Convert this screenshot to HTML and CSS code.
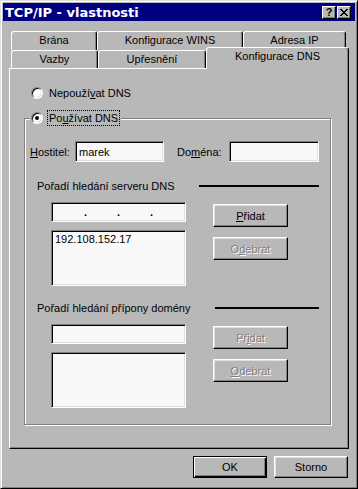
FILE: index.html
```html
<!DOCTYPE html>
<html lang="cs">
<head>
  <meta charset="UTF-8">
  <meta name="viewport" content="width=device-width, initial-scale=1.0">
  <title>TCP/IP - vlastnosti</title>
  <link rel="stylesheet" href="styles.css">
</head>
<body>
  <div class="window">
    <div class="titlebar">
      <span class="title">TCP/IP - vlastnosti</span>
      <div class="caption-buttons">
        <span class="cap-btn help">?</span>
        <span class="cap-btn">
          <svg width="8" height="7" viewBox="0 0 8 7" shape-rendering="crispEdges">
            <path fill="#000" d="M0 0h2v1H0z M6 0h2v1H6z M1 1h2v1H1z M5 1h2v1H5z M2 2h2v1H2z M4 2h2v1H4z M3 3h2v1H3z M2 4h2v1H2z M4 4h2v1H4z M1 5h2v1H1z M5 5h2v1H5z M0 6h2v1H0z M6 6h2v1H6z"/>
          </svg>
        </span>
      </div>
    </div>

    <div class="client">
      <div class="tabs">
        <div class="tabrow back">
          <div class="tab tab-brana">Brána</div>
          <div class="tab tab-wins">Konfigurace WINS</div>
          <div class="tab tab-ip">Adresa IP</div>
        </div>
        <div class="tabrow front">
          <div class="tab tab-vazby">Vazby</div>
          <div class="tab tab-upres">Upřesnění</div>
          <div class="tab tab-dns active">Konfigurace DNS</div>
        </div>
      </div>

      <div class="panel">
        <div class="radio-row">
          <span class="radio"></span>
          <span>Nepouží<u>v</u>at DNS</span>
        </div>

        <div class="group">
          <div class="legend">
            <span class="radio checked"></span>
            <span class="focus">Po<u>u</u>žívat DNS</span>
          </div>

          <div class="field-row">
            <label class="lbl-host"><u>H</u>ostitel:</label>
            <input class="edit host" type="text" value="marek">
            <label class="lbl-domain">Do<u>m</u>éna:</label>
            <input class="edit domain" type="text" value="">
          </div>

          <div class="section-head">
            <span>Pořadí hledání serveru DNS</span>
            <span class="rule"></span>
          </div>
          <div class="section-body">
            <div class="col-left">
              <div class="edit ip">
                <span class="octet"></span><span class="dot">.</span>
                <span class="octet"></span><span class="dot">.</span>
                <span class="octet"></span><span class="dot">.</span>
                <span class="octet"></span>
              </div>
              <div class="edit list">192.108.152.17</div>
            </div>
            <div class="col-right">
              <button class="btn"><u>P</u>řidat</button>
              <button class="btn disabled">O<u>d</u>ebrat</button>
            </div>
          </div>

          <div class="section-head second">
            <span>Pořadí hledání přípony domény</span>
            <span class="rule"></span>
          </div>
          <div class="section-body">
            <div class="col-left">
              <div class="edit ip"></div>
              <div class="edit list"></div>
            </div>
            <div class="col-right">
              <button class="btn disabled">Př<u>i</u>dat</button>
              <button class="btn disabled"><u>O</u>debrat</button>
            </div>
          </div>
        </div>
      </div>

      <div class="dialog-buttons">
        <button class="btn bottom default">OK</button>
        <button class="btn bottom">Storno</button>
      </div>
    </div>
  </div>
</body>
</html>
```

FILE: styles.css
```css
* {
  box-sizing: border-box;
}

body {
  margin: 0;
  background: #b8b8b8;
  font-family: "Liberation Sans", Arial, sans-serif;
  font-size: 11px;
  color: #000;
}

u {
  text-decoration-thickness: 1px;
  text-underline-offset: 1px;
}

.window {
  width: 358px;
  height: 489px;
  padding: 2px;
  border: 1px solid;
  border-color: #dfdfdf #000 #000 #dfdfdf;
  box-shadow: inset 1px 1px #fff, inset -1px -1px #808080;
  background: #b8b8b8;
}

.titlebar {
  height: 18px;
  background: #000080;
  color: #fff;
  display: flex;
  align-items: center;
  justify-content: space-between;
  padding: 0 4px 0 2px;
}

.title {
  font-family: "DejaVu Sans", sans-serif;
  font-weight: bold;
  font-size: 13px;
}

.caption-buttons {
  display: flex;
  gap: 1px;
}

.cap-btn {
  width: 14px;
  height: 13px;
  display: flex;
  align-items: center;
  justify-content: center;
  background: #b8b8b8;
  border: 1px solid;
  border-color: #fff #000 #000 #fff;
  box-shadow: inset -1px -1px #808080;
  color: #000;
}

.cap-btn.help {
  font-weight: bold;
  font-size: 11px;
  line-height: 1;
}

.client {
  margin-top: 10px;
  padding: 0 6px;
}

/* tabs */
.tabrow {
  display: flex;
  align-items: flex-start;
  padding-left: 2px;
}

.tabrow.back {
  height: 19px;
}

.tabrow.front {
  height: 18px;
}

.tab {
  height: 100%;
  border: 1px solid;
  border-bottom: none;
  border-color: #fff #000 transparent #fff;
  border-radius: 3px 3px 0 0;
  box-shadow: inset -1px 0 #808080;
  background: #b8b8b8;
  text-align: center;
  line-height: 17px;
}

.tabrow.front .tab {
  line-height: 16px;
}

.tab-brana { width: 86px; }
.tab-wins { width: 146px; }
.tab-ip { width: 103px; }
.tab-vazby { width: 87px; }
.tab-upres { width: 108px; }
.tab-dns { width: 143px; }

.tabrow.front .tab.active {
  position: relative;
  z-index: 1;
  height: 22px;
  margin-top: -3px;
  line-height: 17px;
}

/* page */
.panel {
  height: 381px;
  border: 1px solid;
  border-color: #fff #000 #000 #fff;
  box-shadow: inset -1px -1px #808080;
  padding: 16px 0 0 14px;
}

.radio-row {
  display: flex;
  align-items: center;
  gap: 6px;
  height: 16px;
  padding-left: 7px;
}

.radio {
  position: relative;
  width: 12px;
  height: 12px;
  flex: none;
  border-radius: 50%;
  border: 1px solid;
  border-color: #808080 #fff #fff #808080;
  box-shadow: inset 1px 1px #000, inset -1px -1px #dfdfdf;
  background: #fff;
}

.radio.checked::after {
  content: "";
  position: absolute;
  left: 3px;
  top: 3px;
  width: 4px;
  height: 4px;
  border-radius: 50%;
  background: #000;
}

.group {
  position: relative;
  width: 307px;
  margin-top: 17px;
  padding-bottom: 16px;
  border: 1px solid #808080;
  box-shadow: inset 1px 1px #fff, 1px 1px #fff;
}

.legend {
  position: absolute;
  top: -9px;
  left: 5px;
  height: 16px;
  display: flex;
  align-items: center;
  gap: 4px;
  padding: 0 1px;
  background: #b8b8b8;
}

.focus {
  height: 16px;
  line-height: 14px;
  padding: 0 1px;
  border: 1px dotted #000;
}

.field-row {
  display: flex;
  align-items: center;
  margin-top: 22px;
  padding-left: 5px;
}

.lbl-host {
  width: 45px;
}

.lbl-domain {
  width: 52px;
  margin-left: 13px;
}

.edit {
  height: 21px;
  border: 1px solid;
  border-color: #808080 #fff #fff #808080;
  box-shadow: inset 1px 1px #000, inset -1px -1px #dfdfdf;
  background: #f8f8f8;
  font: inherit;
  color: #000;
  padding: 0 3px;
  outline: none;
}

.edit.host { width: 89px; }
.edit.domain { width: 90px; }

.section-head {
  display: flex;
  align-items: center;
  height: 14px;
  margin: 17px 11px 0 12px;
}

.section-head.second {
  margin-top: 15px;
}

.rule {
  flex: 1;
  height: 2px;
  margin-left: 24px;
  background: #000;
}

.section-body {
  display: flex;
  gap: 27px;
  margin: 9px 0 0 26px;
}

.col-left {
  width: 135px;
  display: flex;
  flex-direction: column;
  gap: 8px;
}

.edit.ip {
  height: 20px;
  display: flex;
  align-items: center;
  padding: 0 2px;
}

.octet {
  flex: 1;
}

.dot {
  font-weight: bold;
  line-height: 1;
}

.edit.list {
  height: 56px;
  padding: 1px 3px;
  line-height: 14px;
}

.col-right {
  display: flex;
  flex-direction: column;
  gap: 10px;
  margin-top: 2px;
}

.btn {
  width: 75px;
  height: 23px;
  padding: 0;
  display: flex;
  align-items: center;
  justify-content: center;
  font: inherit;
  color: #000;
  background: #b8b8b8;
  border: 1px solid;
  border-color: #fff #000 #000 #fff;
  box-shadow: inset -1px -1px #808080, inset 1px 1px #dfdfdf;
}

.btn.disabled {
  color: #808080;
  text-shadow: 1px 1px #fff;
}

.dialog-buttons {
  display: flex;
  justify-content: flex-end;
  gap: 7px;
  margin-top: 7px;
  padding-right: 1px;
}

.btn.bottom {
  width: 74px;
  height: 22px;
}

.btn.default {
  border-color: #000;
  box-shadow: inset 1px 1px #fff, inset -1px -1px #000, inset -2px -2px #808080;
}
```
